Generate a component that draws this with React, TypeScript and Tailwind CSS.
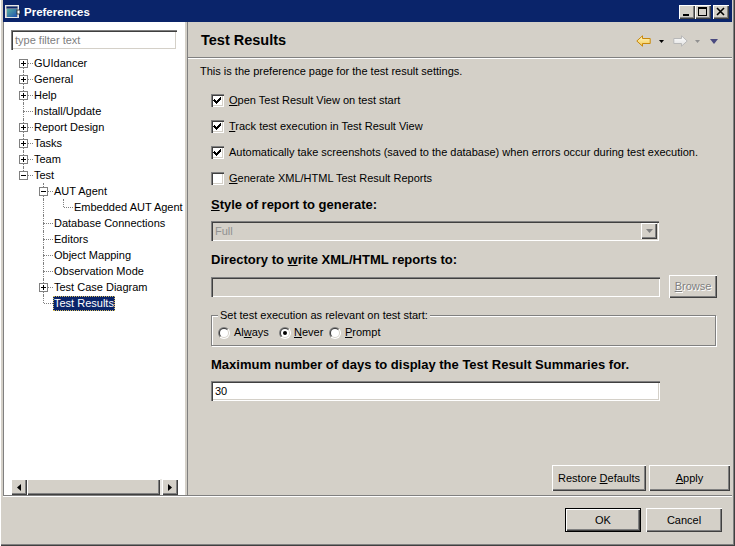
import React from 'react'

// classic win2000 bevels
const RAISED = 'shadow-[inset_1px_1px_0_#fff,inset_-1px_-1px_0_#404040,inset_-2px_-2px_0_#808080]'
const SUNKEN = 'shadow-[inset_1px_1px_0_#808080,inset_2px_2px_0_#404040,inset_-1px_-1px_0_#fff,inset_-2px_-2px_0_#d4d0c8]'

type Row = {
  label: string
  level: number
  exp?: '+' | '-'
  guides: boolean[]
  last?: boolean
  first?: boolean
  selected?: boolean
}

const rows: Row[] = [
  { label: 'GUIdancer', level: 0, exp: '+', guides: [], first: true },
  { label: 'General', level: 0, exp: '+', guides: [] },
  { label: 'Help', level: 0, exp: '+', guides: [] },
  { label: 'Install/Update', level: 0, guides: [] },
  { label: 'Report Design', level: 0, exp: '+', guides: [] },
  { label: 'Tasks', level: 0, exp: '+', guides: [] },
  { label: 'Team', level: 0, exp: '+', guides: [] },
  { label: 'Test', level: 0, exp: '-', guides: [], last: true },
  { label: 'AUT Agent', level: 1, exp: '-', guides: [false] },
  { label: 'Embedded AUT Agent', level: 2, guides: [false, true], last: true },
  { label: 'Database Connections', level: 1, guides: [false] },
  { label: 'Editors', level: 1, guides: [false] },
  { label: 'Object Mapping', level: 1, guides: [false] },
  { label: 'Observation Mode', level: 1, guides: [false] },
  { label: 'Test Case Diagram', level: 1, exp: '+', guides: [false] },
  { label: 'Test Results', level: 1, guides: [false], last: true, selected: true },
]

function TreeRow({ row }: { row: Row }) {
  return (
    <div className="flex h-[16px] items-center">
      {row.guides.map((g, i) => (
        <div key={i} className="relative h-[16px] w-[20px] shrink-0">
          {g && <div className="absolute left-[10px] top-0 h-[16px] border-l border-dotted border-[#808080]" />}
        </div>
      ))}
      <div className="relative h-[16px] w-[20px] shrink-0">
        {!row.first && <div className="absolute left-[10px] top-0 h-[8px] border-l border-dotted border-[#808080]" />}
        {!row.last && <div className="absolute left-[10px] top-[8px] h-[8px] border-l border-dotted border-[#808080]" />}
        <div className="absolute left-[11px] top-[8px] w-[9px] border-t border-dotted border-[#808080]" />
        {row.exp && (
          <div className="absolute left-[6px] top-[4px] h-[9px] w-[9px] border border-[#808080] bg-white">
            <div className="absolute left-[1px] top-[3px] h-px w-[5px] bg-black" />
            {row.exp === '+' && <div className="absolute left-[3px] top-[1px] h-[5px] w-px bg-black" />}
          </div>
        )}
      </div>
      <span
        className={
          row.selected
            ? 'bg-[#0a246a] px-[1px] leading-[15px] text-white outline-1 outline-dotted outline-[#d8c060] -outline-offset-1'
            : 'px-[1px] leading-[15px]'
        }
      >
        {row.label}
      </span>
    </div>
  )
}

function Check({ on }: { on: boolean }) {
  return (
    <span className={`relative block h-[13px] w-[13px] shrink-0 bg-white ${SUNKEN}`}>
      {on && (
        <svg width="13" height="13" viewBox="0 0 13 13" className="absolute left-0 top-0" shapeRendering="crispEdges">
          <path d="M3 5h1v1h1v1h1v-1h1v-1h1v-1h1v-1h1v3h-1v1h-1v1h-1v1h-1v1h-1v-1h-1v-1h-1v-1h-1z" fill="#000" />
        </svg>
      )}
    </span>
  )
}

function Radio({ on, id }: { on: boolean; id: string }) {
  return (
    <svg width="12" height="12" viewBox="0 0 12 12" className="shrink-0">
      <defs>
        <linearGradient id={`o${id}`} x1="0" y1="0" x2="1" y2="1">
          <stop offset="0.5" stopColor="#808080" />
          <stop offset="0.5" stopColor="#ffffff" />
        </linearGradient>
        <linearGradient id={`i${id}`} x1="0" y1="0" x2="1" y2="1">
          <stop offset="0.5" stopColor="#404040" />
          <stop offset="0.5" stopColor="#d4d0c8" />
        </linearGradient>
      </defs>
      <circle cx="6" cy="6" r="6" fill={`url(#o${id})`} />
      <circle cx="6" cy="6" r="5" fill={`url(#i${id})`} />
      <circle cx="6" cy="6" r="4" fill="#fff" />
      {on && <circle cx="6" cy="6" r="2" fill="#000" />}
    </svg>
  )
}

function Btn({ children, w, h, def, disabled }: { children: React.ReactNode; w: string; h: string; def?: boolean; disabled?: boolean }) {
  return (
    <div
      className={`flex items-center justify-center bg-[#d4d0c8] ${w} ${h} ${
        def
          ? 'border border-black shadow-[inset_1px_1px_0_#fff,inset_-1px_-1px_0_#404040,inset_-2px_-2px_0_#808080]'
          : RAISED
      } ${disabled ? 'text-[#808080] [text-shadow:1px_1px_0_#fff]' : 'text-black'}`}
    >
      {children}
    </div>
  )
}

function TitleIcon() {
  return (
    <svg width="16" height="14" viewBox="0 0 16 14">
      <defs>
        <linearGradient id="ti" x1="0" y1="0" x2="1" y2="1">
          <stop offset="0" stopColor="#58b0a0" />
          <stop offset="1" stopColor="#2050b0" />
        </linearGradient>
      </defs>
      <rect x="0.5" y="0.5" width="13" height="12" fill="#c0c0c0" stroke="#e8e8e8" />
      <rect x="1.5" y="1.5" width="11" height="2" fill="#0a246a" />
      <rect x="2" y="4" width="10" height="8" fill="url(#ti)" />
      <rect x="12" y="5" width="3" height="4" fill="#fff" stroke="#202020" strokeWidth="0.8" />
    </svg>
  )
}

function Arrow({ dir, fill1, fill2, stroke }: { dir: 'l' | 'r'; fill1: string; fill2: string; stroke: string }) {
  return (
    <svg width="15" height="12" viewBox="0 0 15 12" className={dir === 'r' ? '-scale-x-100' : ''}>
      <defs>
        <linearGradient id={`ar${dir}`} x1="0" y1="0" x2="0" y2="1">
          <stop offset="0" stopColor={fill1} />
          <stop offset="1" stopColor={fill2} />
        </linearGradient>
      </defs>
      <path d="M0.8 6 L6.5 0.8 L6.5 3.5 L14.2 3.5 L14.2 8.5 L6.5 8.5 L6.5 11.2 Z" fill={`url(#ar${dir})`} stroke={stroke} strokeWidth="1" strokeLinejoin="round" />
    </svg>
  )
}

function Tri({ color, w, h }: { color: string; w: number; h: number }) {
  return (
    <svg width={w} height={h} viewBox={`0 0 ${w} ${h}`}>
      <path d={`M0 0 H${w} L${w / 2} ${h} Z`} fill={color} />
    </svg>
  )
}

export default function App() {
  return (
    <div className="flex h-[546px] w-[735px] flex-col bg-[#d4d0c8] px-[3px] pb-[3px] font-['Liberation_Sans',Arial,sans-serif] text-[11px] text-black shadow-[inset_1px_0_0_#fff,inset_-1px_-1px_0_#404040,inset_-2px_-2px_0_#808080]">
      {/* title bar */}
      <div className="flex h-[22px] shrink-0 items-start bg-[#0a246a] pr-[3px]">
        <div className="ml-[2px] mt-[5px]">
          <TitleIcon />
        </div>
        <span className="ml-[3px] mt-[4px] text-[11.5px] font-bold leading-[16px] text-white">Preferences</span>
        <div className="ml-auto mt-[5px] flex">
          <div className={`relative h-[14px] w-[16px] bg-[#d4d0c8] ${RAISED}`}>
            <div className="absolute left-[4px] top-[9px] h-[2px] w-[6px] bg-black" />
          </div>
          <div className={`relative h-[14px] w-[16px] bg-[#d4d0c8] ${RAISED}`}>
            <div className="absolute left-[3px] top-[2px] h-[9px] w-[9px] border border-t-2 border-black" />
          </div>
          <div className={`relative ml-[2px] h-[14px] w-[16px] bg-[#d4d0c8] ${RAISED}`}>
            <svg width="16" height="14" viewBox="0 0 16 14" className="absolute left-0 top-0">
              <path d="M4 3 L11 10 M11 3 L4 10" stroke="#000" strokeWidth="1.6" />
            </svg>
          </div>
        </div>
      </div>

      {/* main area */}
      <div className="flex h-[473px] shrink-0">
        {/* left panel */}
        <div className="flex w-[182px] shrink-0 flex-col border-l border-[#808080] bg-white pl-[7px]">
          <div className={`mt-[8px] flex h-[20px] w-[166px] items-center bg-white pl-[4px] text-[#808080] ${SUNKEN}`}>
            type filter text
          </div>
          <div className="ml-[2px] mt-[5px] flex-1">
            {rows.map((r) => (
              <TreeRow key={r.label} row={r} />
            ))}
          </div>
          <div className="flex h-[16px] w-[167px]">
            <div className={`flex h-[16px] w-[16px] items-center justify-center bg-[#d4d0c8] ${RAISED}`}>
              <svg width="4" height="7" viewBox="0 0 4 7">
                <path d="M4 0 V7 L0 3.5 Z" fill="#000" />
              </svg>
            </div>
            <div className={`h-[16px] w-[133px] bg-[#d4d0c8] ${RAISED}`} />
            <div className="h-[16px] w-[2px] bg-[#eae8e4]" />
            <div className={`flex h-[16px] w-[16px] items-center justify-center bg-[#d4d0c8] ${RAISED}`}>
              <svg width="4" height="7" viewBox="0 0 4 7">
                <path d="M0 0 V7 L4 3.5 Z" fill="#000" />
              </svg>
            </div>
          </div>
        </div>
        {/* sash */}
        <div className="w-[2px] shrink-0 bg-[#d4d0c8]" />
        <div className="w-px shrink-0 bg-[#808080]" />

        {/* right panel */}
        <div className="flex w-[544px] shrink-0 flex-col">
          <div className="flex h-[35px] shrink-0 items-center pl-[13px] pr-[14px] pt-[3px]">
            <span className="text-[14.5px] font-bold">Test Results</span>
            <div className="ml-auto flex items-center">
              <Arrow dir="l" fill1="#fff8c8" fill2="#f4c850" stroke="#c8880c" />
              <div className="ml-[8px] mt-[1px]">
                <Tri color="#000" w={5} h={3} />
              </div>
              <div className="ml-[9px]">
                <Arrow dir="r" fill1="#ffffff" fill2="#e0e0e0" stroke="#b8b8b8" />
              </div>
              <div className="ml-[7px] mt-[1px]">
                <Tri color="#909090" w={5} h={3} />
              </div>
              <div className="ml-[10px] mt-[1px]">
                <Tri color="#4a4a80" w={8} h={5} />
              </div>
            </div>
          </div>
          <div className="h-px shrink-0 bg-[#808080]" />
          <div className="h-px shrink-0 bg-white" />

          <div className="flex flex-1 flex-col">
            <div className="mt-[6px] pl-[12px] leading-[13px]">This is the preference page for the test result settings.</div>

            <div className="mt-[16px] flex flex-col gap-[13px] pl-[23px]">
              <label className="flex h-[13px] items-center gap-[5px]">
                <Check on />
                <span><u>O</u>pen Test Result View on test start</span>
              </label>
              <label className="flex h-[13px] items-center gap-[5px]">
                <Check on />
                <span><u>T</u>rack test execution in Test Result View</span>
              </label>
              <label className="flex h-[13px] items-center gap-[5px]">
                <Check on />
                <span>Automatically take screenshots (saved to the database) when errors occur during test execution.</span>
              </label>
              <label className="flex h-[13px] items-center gap-[5px]">
                <Check on={false} />
                <span><u>G</u>enerate XML/HTML Test Result Reports</span>
              </label>
            </div>

            <div className="mt-[12px] pl-[23px] text-[13px] font-bold leading-[16px]">
              <u>S</u>tyle of report to generate:
            </div>
            <div className="mt-[8px] pl-[23px]">
              <div className={`flex h-[20px] w-[448px] items-center bg-[#d4d0c8] pl-[4px] pr-[2px] text-[#909090] ${SUNKEN}`}>
                Full
                <div className={`ml-auto flex h-[16px] w-[16px] items-center justify-center bg-[#d4d0c8] ${RAISED}`}>
                  <svg width="7" height="4" viewBox="0 0 7 4">
                    <path d="M0 0 H7 L3.5 4 Z" fill="#808080" />
                  </svg>
                </div>
              </div>
            </div>

            <div className="mt-[11px] pl-[23px] text-[13px] font-bold leading-[16px]">
              Directory to <u>w</u>rite XML/HTML reports to:
            </div>
            <div className="mt-[7px] flex items-center gap-[9px] pl-[23px]">
              <div className={`h-[20px] w-[449px] bg-[#d4d0c8] ${SUNKEN}`} />
              <Btn w="w-[48px]" h="h-[23px]" disabled>
                <span><u>B</u>rowse</span>
              </Btn>
            </div>

            <div className="mt-[17px] pl-[23px]">
              <div className="relative w-[505px] border border-[#808080] pb-[6px] pl-[6px] pt-[10px] shadow-[inset_1px_1px_0_#fff,1px_1px_0_#fff]">
                <span className="absolute -top-[7px] left-[6px] bg-[#d4d0c8] px-[2px] leading-[13px]">
                  Set test execution as relevant on test start:
                </span>
                <div className="flex h-[13px] items-center">
                  <label className="flex w-[61px] items-center gap-[4px]">
                    <Radio on={false} id="a" />
                    <span>Al<u>w</u>ays</span>
                  </label>
                  <label className="flex w-[50px] items-center gap-[3px]">
                    <Radio on id="n" />
                    <span><u>N</u>ever</span>
                  </label>
                  <label className="flex items-center gap-[4px]">
                    <Radio on={false} id="p" />
                    <span><u>P</u>rompt</span>
                  </label>
                </div>
              </div>
            </div>

            <div className="mt-[11px] pl-[23px] text-[13px] font-bold leading-[16px]">
              Maximum number of days to display the Test Result Summaries for.
            </div>
            <div className="mt-[8px] pl-[23px]">
              <div className={`flex h-[20px] w-[449px] items-center bg-white pl-[4px] ${SUNKEN}`}>30</div>
            </div>

            <div className="mt-auto flex justify-end gap-[3px] pb-[4px] pr-[2px]">
              <Btn w="w-[94px]" h="h-[26px]">
                <span>Restore <u>D</u>efaults</span>
              </Btn>
              <Btn w="w-[81px]" h="h-[26px]">
                <span><u>A</u>pply</span>
              </Btn>
            </div>
          </div>
        </div>
      </div>

      {/* separator */}
      <div className="h-px shrink-0 bg-[#808080]" />
      <div className="h-px shrink-0 bg-white" />

      {/* dialog buttons */}
      <div className="flex flex-1 justify-end gap-[5px] pr-[10px] pt-[11px]">
        <Btn w="w-[76px]" h="h-[24px]" def>
          OK
        </Btn>
        <Btn w="w-[76px]" h="h-[24px]">
          Cancel
        </Btn>
      </div>
    </div>
  )
}
